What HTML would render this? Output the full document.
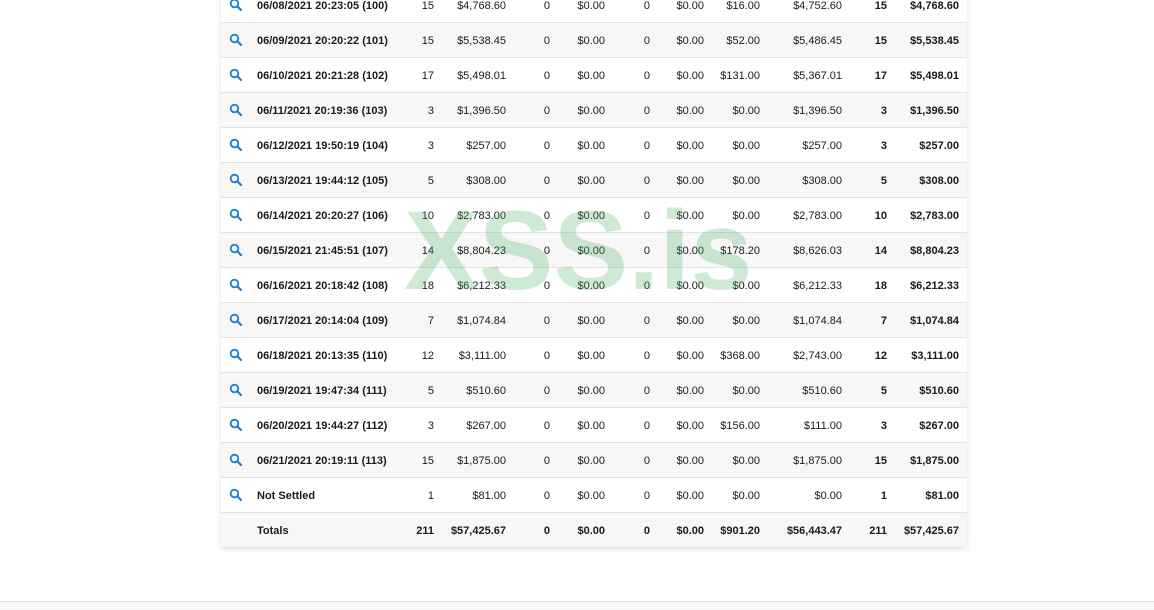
<!DOCTYPE html>
<html><head><meta charset="utf-8"><style>
body{margin:0;width:1154px;height:609px;overflow:hidden;background:#fff;font-family:"Liberation Sans",Arial,sans-serif;font-size:11px;color:#1a1a1a;position:relative}
#t{position:absolute;left:221px;top:-12px;width:746px;height:559px;box-shadow:0 2px 5px rgba(0,0,0,.12);background:#fff}
.r{position:absolute;left:0;width:746px;height:34px;border-bottom:1px solid #e2e2e2;line-height:35px}
.g{background:#f7f7f7}
.r span{position:absolute;top:1px;white-space:nowrap}
.d{left:36px;font-weight:bold}
.c1{right:533px}.c2{right:461px}.c3{right:417px}.c4{right:362px}.c5{right:317px}.c6{right:263px}.c7{right:207px}.c8{right:125px}.c9{right:80px;font-weight:bold}.c10{right:8px;font-weight:bold}
.tot span{font-weight:bold}
svg.i{position:absolute;left:8px;top:10px}
#foot{position:absolute;left:0;top:601px;width:1154px;height:8px;background:#f7f7f7;border-top:1px solid #dcdcdc}
#wm{position:absolute;left:404px;top:186px;font-size:112px;font-weight:bold;color:rgba(80,180,105,.28);line-height:130px;pointer-events:none}
</style></head><body>
<div id="t">
<div class="r" style="top:0"><svg class="i" width="14" height="14" viewBox="0 0 14 14"><circle cx="5.5" cy="5.5" r="3.8" fill="none" stroke="#1a7fd4" stroke-width="1.8"/><path d="M8.4 8.4L12 12" stroke="#1a7fd4" stroke-width="2.2" stroke-linecap="round"/></svg><span class="d">06/08/2021 20:23:05 (100)</span><span class="c1">15</span><span class="c2">$4,768.60</span><span class="c3">0</span><span class="c4">$0.00</span><span class="c5">0</span><span class="c6">$0.00</span><span class="c7">$16.00</span><span class="c8">$4,752.60</span><span class="c9">15</span><span class="c10">$4,768.60</span></div>
<div class="r g" style="top:35px"><svg class="i" width="14" height="14" viewBox="0 0 14 14"><circle cx="5.5" cy="5.5" r="3.8" fill="none" stroke="#1a7fd4" stroke-width="1.8"/><path d="M8.4 8.4L12 12" stroke="#1a7fd4" stroke-width="2.2" stroke-linecap="round"/></svg><span class="d">06/09/2021 20:20:22 (101)</span><span class="c1">15</span><span class="c2">$5,538.45</span><span class="c3">0</span><span class="c4">$0.00</span><span class="c5">0</span><span class="c6">$0.00</span><span class="c7">$52.00</span><span class="c8">$5,486.45</span><span class="c9">15</span><span class="c10">$5,538.45</span></div>
<div class="r" style="top:70px"><svg class="i" width="14" height="14" viewBox="0 0 14 14"><circle cx="5.5" cy="5.5" r="3.8" fill="none" stroke="#1a7fd4" stroke-width="1.8"/><path d="M8.4 8.4L12 12" stroke="#1a7fd4" stroke-width="2.2" stroke-linecap="round"/></svg><span class="d">06/10/2021 20:21:28 (102)</span><span class="c1">17</span><span class="c2">$5,498.01</span><span class="c3">0</span><span class="c4">$0.00</span><span class="c5">0</span><span class="c6">$0.00</span><span class="c7">$131.00</span><span class="c8">$5,367.01</span><span class="c9">17</span><span class="c10">$5,498.01</span></div>
<div class="r g" style="top:105px"><svg class="i" width="14" height="14" viewBox="0 0 14 14"><circle cx="5.5" cy="5.5" r="3.8" fill="none" stroke="#1a7fd4" stroke-width="1.8"/><path d="M8.4 8.4L12 12" stroke="#1a7fd4" stroke-width="2.2" stroke-linecap="round"/></svg><span class="d">06/11/2021 20:19:36 (103)</span><span class="c1">3</span><span class="c2">$1,396.50</span><span class="c3">0</span><span class="c4">$0.00</span><span class="c5">0</span><span class="c6">$0.00</span><span class="c7">$0.00</span><span class="c8">$1,396.50</span><span class="c9">3</span><span class="c10">$1,396.50</span></div>
<div class="r" style="top:140px"><svg class="i" width="14" height="14" viewBox="0 0 14 14"><circle cx="5.5" cy="5.5" r="3.8" fill="none" stroke="#1a7fd4" stroke-width="1.8"/><path d="M8.4 8.4L12 12" stroke="#1a7fd4" stroke-width="2.2" stroke-linecap="round"/></svg><span class="d">06/12/2021 19:50:19 (104)</span><span class="c1">3</span><span class="c2">$257.00</span><span class="c3">0</span><span class="c4">$0.00</span><span class="c5">0</span><span class="c6">$0.00</span><span class="c7">$0.00</span><span class="c8">$257.00</span><span class="c9">3</span><span class="c10">$257.00</span></div>
<div class="r g" style="top:175px"><svg class="i" width="14" height="14" viewBox="0 0 14 14"><circle cx="5.5" cy="5.5" r="3.8" fill="none" stroke="#1a7fd4" stroke-width="1.8"/><path d="M8.4 8.4L12 12" stroke="#1a7fd4" stroke-width="2.2" stroke-linecap="round"/></svg><span class="d">06/13/2021 19:44:12 (105)</span><span class="c1">5</span><span class="c2">$308.00</span><span class="c3">0</span><span class="c4">$0.00</span><span class="c5">0</span><span class="c6">$0.00</span><span class="c7">$0.00</span><span class="c8">$308.00</span><span class="c9">5</span><span class="c10">$308.00</span></div>
<div class="r" style="top:210px"><svg class="i" width="14" height="14" viewBox="0 0 14 14"><circle cx="5.5" cy="5.5" r="3.8" fill="none" stroke="#1a7fd4" stroke-width="1.8"/><path d="M8.4 8.4L12 12" stroke="#1a7fd4" stroke-width="2.2" stroke-linecap="round"/></svg><span class="d">06/14/2021 20:20:27 (106)</span><span class="c1">10</span><span class="c2">$2,783.00</span><span class="c3">0</span><span class="c4">$0.00</span><span class="c5">0</span><span class="c6">$0.00</span><span class="c7">$0.00</span><span class="c8">$2,783.00</span><span class="c9">10</span><span class="c10">$2,783.00</span></div>
<div class="r g" style="top:245px"><svg class="i" width="14" height="14" viewBox="0 0 14 14"><circle cx="5.5" cy="5.5" r="3.8" fill="none" stroke="#1a7fd4" stroke-width="1.8"/><path d="M8.4 8.4L12 12" stroke="#1a7fd4" stroke-width="2.2" stroke-linecap="round"/></svg><span class="d">06/15/2021 21:45:51 (107)</span><span class="c1">14</span><span class="c2">$8,804.23</span><span class="c3">0</span><span class="c4">$0.00</span><span class="c5">0</span><span class="c6">$0.00</span><span class="c7">$178.20</span><span class="c8">$8,626.03</span><span class="c9">14</span><span class="c10">$8,804.23</span></div>
<div class="r" style="top:280px"><svg class="i" width="14" height="14" viewBox="0 0 14 14"><circle cx="5.5" cy="5.5" r="3.8" fill="none" stroke="#1a7fd4" stroke-width="1.8"/><path d="M8.4 8.4L12 12" stroke="#1a7fd4" stroke-width="2.2" stroke-linecap="round"/></svg><span class="d">06/16/2021 20:18:42 (108)</span><span class="c1">18</span><span class="c2">$6,212.33</span><span class="c3">0</span><span class="c4">$0.00</span><span class="c5">0</span><span class="c6">$0.00</span><span class="c7">$0.00</span><span class="c8">$6,212.33</span><span class="c9">18</span><span class="c10">$6,212.33</span></div>
<div class="r g" style="top:315px"><svg class="i" width="14" height="14" viewBox="0 0 14 14"><circle cx="5.5" cy="5.5" r="3.8" fill="none" stroke="#1a7fd4" stroke-width="1.8"/><path d="M8.4 8.4L12 12" stroke="#1a7fd4" stroke-width="2.2" stroke-linecap="round"/></svg><span class="d">06/17/2021 20:14:04 (109)</span><span class="c1">7</span><span class="c2">$1,074.84</span><span class="c3">0</span><span class="c4">$0.00</span><span class="c5">0</span><span class="c6">$0.00</span><span class="c7">$0.00</span><span class="c8">$1,074.84</span><span class="c9">7</span><span class="c10">$1,074.84</span></div>
<div class="r" style="top:350px"><svg class="i" width="14" height="14" viewBox="0 0 14 14"><circle cx="5.5" cy="5.5" r="3.8" fill="none" stroke="#1a7fd4" stroke-width="1.8"/><path d="M8.4 8.4L12 12" stroke="#1a7fd4" stroke-width="2.2" stroke-linecap="round"/></svg><span class="d">06/18/2021 20:13:35 (110)</span><span class="c1">12</span><span class="c2">$3,111.00</span><span class="c3">0</span><span class="c4">$0.00</span><span class="c5">0</span><span class="c6">$0.00</span><span class="c7">$368.00</span><span class="c8">$2,743.00</span><span class="c9">12</span><span class="c10">$3,111.00</span></div>
<div class="r g" style="top:385px"><svg class="i" width="14" height="14" viewBox="0 0 14 14"><circle cx="5.5" cy="5.5" r="3.8" fill="none" stroke="#1a7fd4" stroke-width="1.8"/><path d="M8.4 8.4L12 12" stroke="#1a7fd4" stroke-width="2.2" stroke-linecap="round"/></svg><span class="d">06/19/2021 19:47:34 (111)</span><span class="c1">5</span><span class="c2">$510.60</span><span class="c3">0</span><span class="c4">$0.00</span><span class="c5">0</span><span class="c6">$0.00</span><span class="c7">$0.00</span><span class="c8">$510.60</span><span class="c9">5</span><span class="c10">$510.60</span></div>
<div class="r" style="top:420px"><svg class="i" width="14" height="14" viewBox="0 0 14 14"><circle cx="5.5" cy="5.5" r="3.8" fill="none" stroke="#1a7fd4" stroke-width="1.8"/><path d="M8.4 8.4L12 12" stroke="#1a7fd4" stroke-width="2.2" stroke-linecap="round"/></svg><span class="d">06/20/2021 19:44:27 (112)</span><span class="c1">3</span><span class="c2">$267.00</span><span class="c3">0</span><span class="c4">$0.00</span><span class="c5">0</span><span class="c6">$0.00</span><span class="c7">$156.00</span><span class="c8">$111.00</span><span class="c9">3</span><span class="c10">$267.00</span></div>
<div class="r g" style="top:455px"><svg class="i" width="14" height="14" viewBox="0 0 14 14"><circle cx="5.5" cy="5.5" r="3.8" fill="none" stroke="#1a7fd4" stroke-width="1.8"/><path d="M8.4 8.4L12 12" stroke="#1a7fd4" stroke-width="2.2" stroke-linecap="round"/></svg><span class="d">06/21/2021 20:19:11 (113)</span><span class="c1">15</span><span class="c2">$1,875.00</span><span class="c3">0</span><span class="c4">$0.00</span><span class="c5">0</span><span class="c6">$0.00</span><span class="c7">$0.00</span><span class="c8">$1,875.00</span><span class="c9">15</span><span class="c10">$1,875.00</span></div>
<div class="r" style="top:490px"><svg class="i" width="14" height="14" viewBox="0 0 14 14"><circle cx="5.5" cy="5.5" r="3.8" fill="none" stroke="#1a7fd4" stroke-width="1.8"/><path d="M8.4 8.4L12 12" stroke="#1a7fd4" stroke-width="2.2" stroke-linecap="round"/></svg><span class="d">Not Settled</span><span class="c1">1</span><span class="c2">$81.00</span><span class="c3">0</span><span class="c4">$0.00</span><span class="c5">0</span><span class="c6">$0.00</span><span class="c7">$0.00</span><span class="c8">$0.00</span><span class="c9">1</span><span class="c10">$81.00</span></div>
<div class="r g tot" style="top:525px;border-bottom:none;height:34px"><span class="d">Totals</span><span class="c1">211</span><span class="c2">$57,425.67</span><span class="c3">0</span><span class="c4">$0.00</span><span class="c5">0</span><span class="c6">$0.00</span><span class="c7">$901.20</span><span class="c8">$56,443.47</span><span class="c9">211</span><span class="c10">$57,425.67</span></div>
</div>
<div id="wm">XSS.is</div>
<div id="foot"></div>
</body></html>
